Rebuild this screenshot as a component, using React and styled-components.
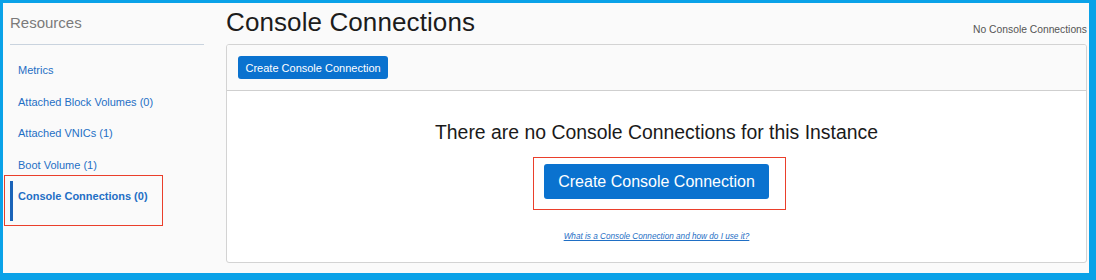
import React from 'react';
import styled, { createGlobalStyle } from 'styled-components';

const GlobalStyle = createGlobalStyle`
	html, body {
		margin: 0;
		padding: 0;
		background: #ffffff;
	}
	body {
		font-family: "Liberation Sans", Arial, Helvetica, sans-serif;
	}
`;

const Frame = styled.div`
	box-sizing: border-box;
	width: 1096px;
	height: 280px;
	border-style: solid;
	border-color: #0aa2e8;
	border-width: 3px 7px 7px 3px;
	background-color: #fafafa;
	display: flex;
	overflow: hidden;
`;

const Sidebar = styled.aside`
	box-sizing: border-box;
	width: 223px;
	flex-shrink: 0;
	padding: 0 22px 0 7px;
`;

const SideTitle = styled.h2`
	margin: 0;
	padding: 10px 0 11px 0;
	font-size: 15px;
	line-height: 20px;
	font-weight: 400;
	color: #7a7a7a;
	border-bottom: 1px solid #c9d3de;
`;

const SideList = styled.ul`
	list-style: none;
	margin: 10px 0 0 0;
	padding: 0;
`;

const SideItem = styled.li`
	position: relative;
	box-sizing: border-box;
	padding: 9px 0 ${({ $active }) => ($active ? '17.5px' : '9px')} ${({ $active }) => ($active ? '5px' : '8px')};
	border-left: ${({ $active }) => ($active ? '3px solid #1a63b8' : 'none')};
	font-size: 11px;
	line-height: 13.5px;
	font-weight: ${({ $active }) => ($active ? 700 : 400)};
	color: #1f6fc5;
`;

const Highlight = styled.span`
	position: absolute;
	pointer-events: none;
	border: 1.5px solid #ea3f2b;
	box-sizing: border-box;
	left: ${({ $left }) => $left}px;
	top: ${({ $top }) => $top}px;
	width: ${({ $width }) => $width}px;
	height: ${({ $height }) => $height}px;
`;

const Main = styled.main`
	flex: 1;
	margin-right: 2px;
	display: flex;
	flex-direction: column;
	min-width: 0;
`;

const MainHeader = styled.div`
	height: 41px;
	display: flex;
	justify-content: space-between;
	align-items: flex-start;
`;

const PageTitle = styled.h1`
	margin: 0;
	padding-top: 4px;
	font-size: 26px;
	line-height: 31px;
	font-weight: 400;
	color: #1c1c1c;
	letter-spacing: 0.1px;
`;

const CountText = styled.span`
	margin-top: 20px;
	font-size: 10.3px;
	line-height: 14px;
	color: #555555;
`;

const Card = styled.section`
	box-sizing: border-box;
	height: 219px;
	border: 1px solid #d3d3d3;
	border-radius: 3px;
	background-color: #ffffff;
	display: flex;
	flex-direction: column;
	overflow: hidden;
`;

const CardHeader = styled.div`
	padding: 11px;
	background-color: #fafafa;
	border-bottom: 1px solid #cfcfcf;
	display: flex;
`;

const Button = styled.button`
	box-sizing: border-box;
	height: ${({ $big }) => ($big ? '35px' : '23px')};
	padding: ${({ $big }) => ($big ? '0 14px' : '0 7.5px')};
	border: none;
	border-radius: 3px;
	background-color: #0a72cf;
	color: #ffffff;
	font-family: "Liberation Sans", Arial, sans-serif;
	font-size: ${({ $big }) => ($big ? '16px' : '11px')};
	cursor: pointer;
`;

const EmptyState = styled.div`
	flex: 1;
	padding-top: 30px;
	display: flex;
	flex-direction: column;
	align-items: center;
`;

const EmptyMessage = styled.p`
	margin: 0;
	font-size: 19.4px;
	line-height: 23px;
	color: #1a1a1a;
`;

const ButtonWrap = styled.div`
	position: relative;
	margin-top: 20px;
	display: flex;
`;

const HelpLink = styled.a`
	margin-top: 32px;
	font-size: 8.2px;
	line-height: 11px;
	font-style: italic;
	color: #1f6fc5;
	text-decoration: underline;
`;

const resources = [
	'Metrics',
	'Attached Block Volumes (0)',
	'Attached VNICs (1)',
	'Boot Volume (1)',
	'Console Connections (0)',
];

export default function App() {
	const active = 'Console Connections (0)';

	return (
		<>
			<GlobalStyle />
			<Frame>
				<Sidebar>
					<SideTitle>Resources</SideTitle>
					<SideList>
						{resources.map((name) => (
							<SideItem key={name} $active={name === active}>
								{name}
								{name === active && (
									<Highlight $left={-9} $top={-6} $width={159} $height={51} />
								)}
							</SideItem>
						))}
					</SideList>
				</Sidebar>

				<Main>
					<MainHeader>
						<PageTitle>Console Connections</PageTitle>
						<CountText>No Console Connections</CountText>
					</MainHeader>

					<Card>
						<CardHeader>
							<Button>Create Console Connection</Button>
						</CardHeader>
						<EmptyState>
							<EmptyMessage>
								There are no Console Connections for this Instance
							</EmptyMessage>
							<ButtonWrap>
								<Button $big>Create Console Connection</Button>
								<Highlight $left={-11} $top={-7} $width={253} $height={53} />
							</ButtonWrap>
							<HelpLink href="#">
								What is a Console Connection and how do I use it?
							</HelpLink>
						</EmptyState>
					</Card>
				</Main>
			</Frame>
		</>
	);
}
